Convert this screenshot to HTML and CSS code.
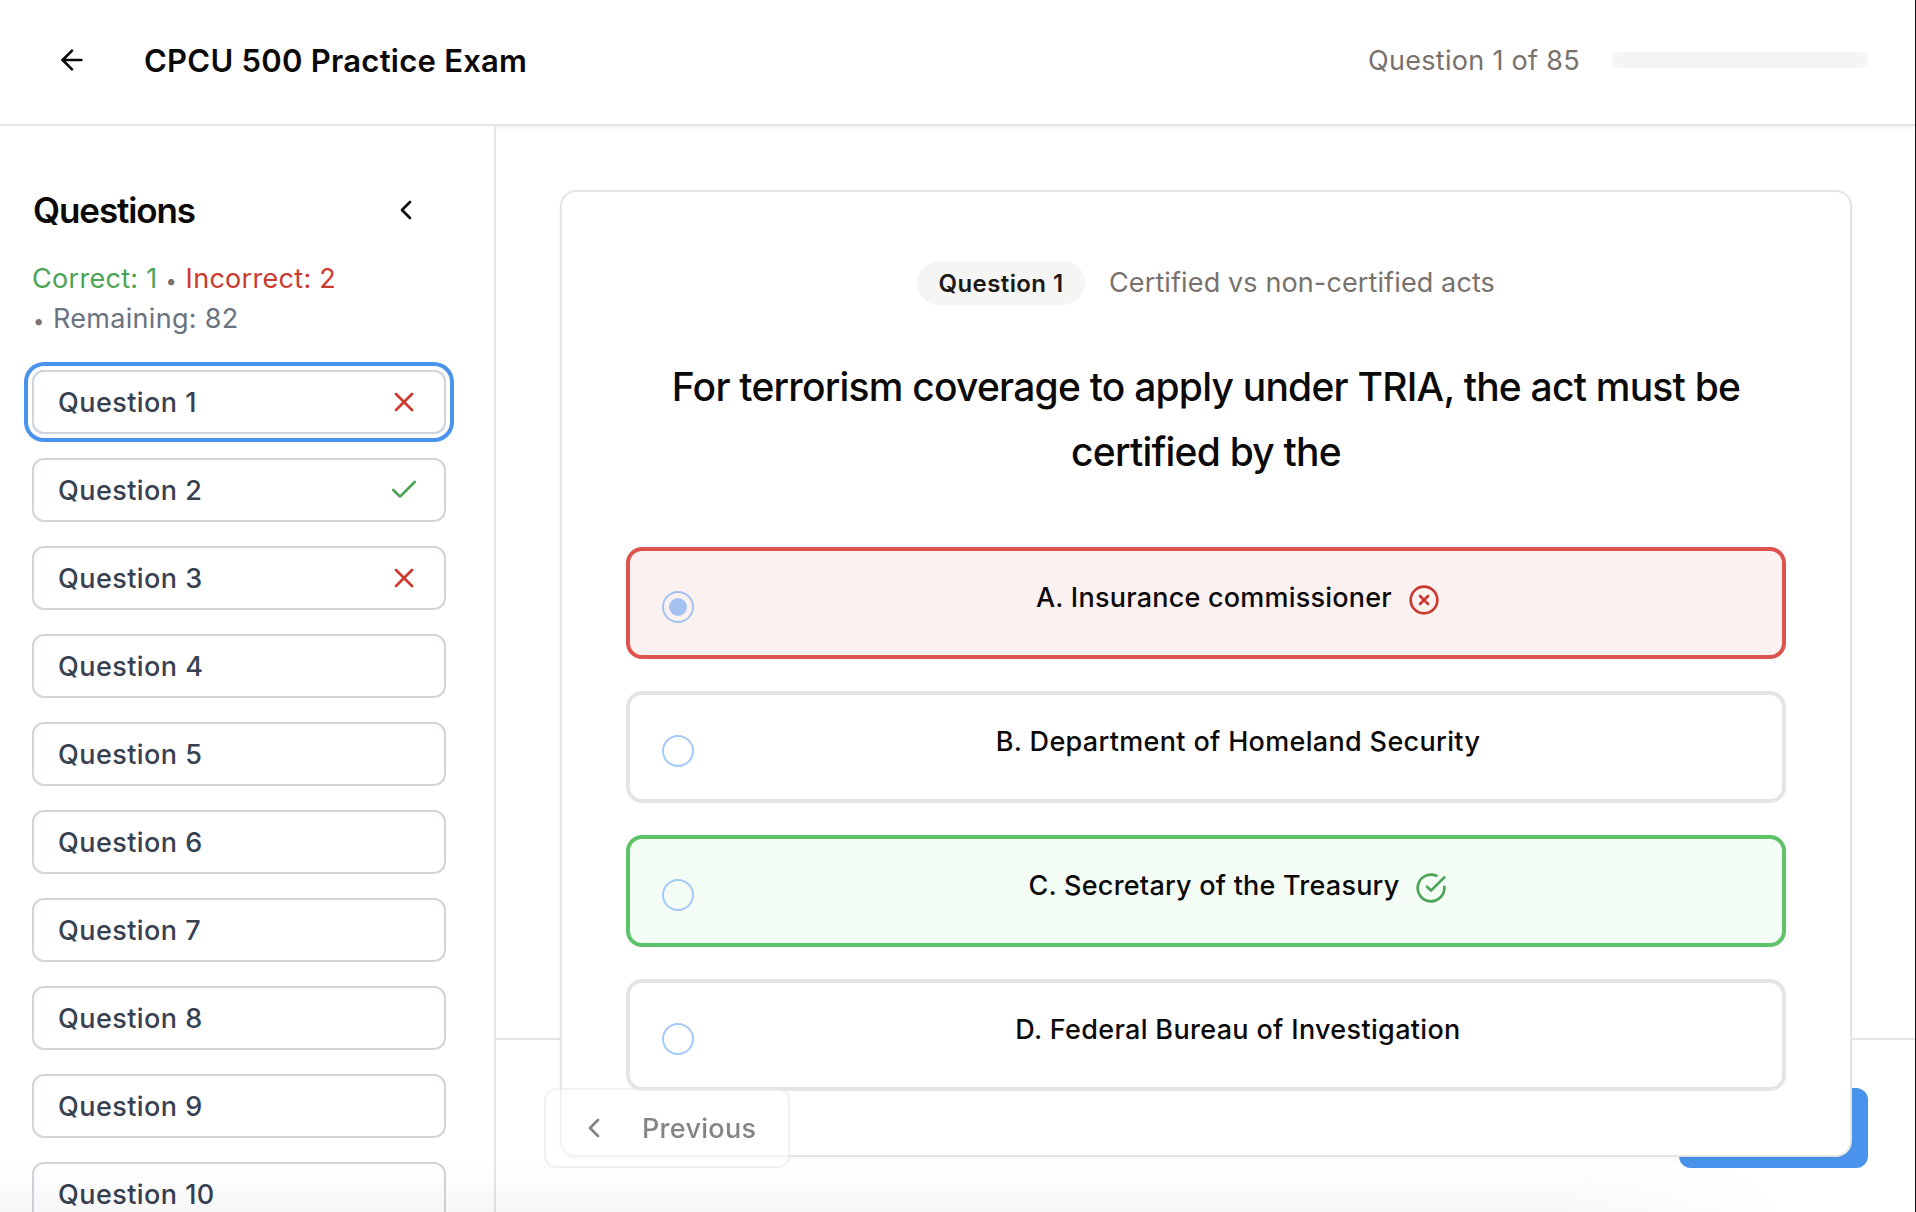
FILE: index.html
```html
<!DOCTYPE html>
<html lang="en">
<head>
<meta charset="utf-8">
<title>CPCU 500 Practice Exam</title>
<link rel="stylesheet" href="styles.css">
</head>
<body>
<svg class="sprite" aria-hidden="true">
  <symbol id="arrow-left" viewBox="0 0 24 24"><path d="m12 19-7-7 7-7"/><path d="M19 12H5"/></symbol>
  <symbol id="chevron-left" viewBox="0 0 24 24"><path d="m15 18-6-6 6-6"/></symbol>
  <symbol id="x" viewBox="0 0 24 24"><path d="M18 6 6 18"/><path d="m6 6 12 12"/></symbol>
  <symbol id="check" viewBox="0 0 24 24"><path d="M20 6 9 17l-5-5"/></symbol>
  <symbol id="circle-x" viewBox="0 0 24 24"><circle cx="12" cy="12" r="10"/><path d="m15 9-6 6"/><path d="m9 9 6 6"/></symbol>
  <symbol id="circle-check" viewBox="0 0 24 24"><path d="M22 11.08V12a10 10 0 1 1-5.93-9.14"/><path d="m9 11 3 3L22 4"/></symbol>
</svg>
<div class="app">
  <header class="header">
    <svg class="icon"><use href="#arrow-left"/></svg>
    <h1 class="title">CPCU 500 Practice Exam</h1>
    <span class="counter">Question 1 of 85</span>
    <div class="progress"></div>
  </header>
  <div class="body">
    <aside class="sidebar">
      <div class="sidebar-head">
        <h2 class="sidebar-title">Questions</h2>
        <svg class="icon"><use href="#chevron-left"/></svg>
      </div>
      <div class="stats">
        <div><span class="correct">Correct: 1</span><span class="dot">•</span><span class="incorrect">Incorrect: 2</span></div>
        <div><span class="dot dot-first">•</span><span class="remaining">Remaining: 82</span></div>
      </div>
      <nav class="list">
        <div class="item item-active">Question 1<svg class="icon incorrect"><use href="#x"/></svg></div>
        <div class="item">Question 2<svg class="icon correct"><use href="#check"/></svg></div>
        <div class="item">Question 3<svg class="icon incorrect"><use href="#x"/></svg></div>
        <div class="item">Question 4</div>
        <div class="item">Question 5</div>
        <div class="item">Question 6</div>
        <div class="item">Question 7</div>
        <div class="item">Question 8</div>
        <div class="item">Question 9</div>
        <div class="item">Question 10</div>
      </nav>
    </aside>
    <main class="main">
      <section class="card">
        <div class="meta"><span class="badge">Question 1</span><span class="topic">Certified vs non-certified acts</span></div>
        <h3 class="prompt">For terrorism coverage to apply under TRIA, the act must be<br>certified by the</h3>
        <div class="options">
          <div class="option option-wrong"><span class="radio radio-on"></span><div class="label"><span class="text-a">A. Insurance commissioner</span><svg class="icon incorrect"><use href="#circle-x"/></svg></div></div>
          <div class="option"><span class="radio"></span><div class="label"><span>B. Department of Homeland Security</span></div></div>
          <div class="option option-right"><span class="radio"></span><div class="label"><span class="text-a">C. Secretary of the Treasury</span><svg class="icon correct"><use href="#circle-check"/></svg></div></div>
          <div class="option"><span class="radio"></span><div class="label"><span>D. Federal Bureau of Investigation</span></div></div>
        </div>
      </section>
      <footer class="footer">
        <div class="previous"><svg class="icon"><use href="#chevron-left"/></svg>Previous</div>
        <div class="next"></div>
      </footer>
    </main>
  </div>
  <div class="fade"></div>
  <div class="edge"></div>
</div>
</body>
</html>
```
FILE: styles.css
```css
* { box-sizing: border-box; }
body { margin: 0; background: #fff; color: #0c0a09; font-family: Inter, "Liberation Sans", sans-serif; font-size: 27px; }
h1, h2, h3 { margin: 0; }
.sprite { display: none; }
.icon { width: 32px; height: 32px; flex: none; fill: none; stroke: currentColor; stroke-width: 2; stroke-linecap: round; stroke-linejoin: round; }
.app { position: relative; display: flex; flex-direction: column; width: 1916px; height: 1212px; overflow: hidden; }

.header { position: relative; z-index: 1; display: flex; align-items: center; flex: none; height: 126px; padding: 0 48px 4px 56px; background: #fff; border-bottom: 2px solid #e5e5e5; box-shadow: 0 2px 6px rgba(0, 0, 0, .06); }
.title { flex: 1; margin-left: 56px; font-size: 31px; font-weight: 600; letter-spacing: .25px; }
.counter { color: #78716c; letter-spacing: .3px; }
.progress { width: 256px; height: 16px; margin-left: 32px; border-radius: 8px; background: #f5f5f4; }

.body { display: flex; flex: 1; min-height: 0; }
.sidebar { position: relative; z-index: 2; flex: none; width: 496px; padding: 64px 48px 0 32px; background: #fff; border-right: 2px solid #e5e5e5; }
.sidebar-head { display: flex; align-items: center; justify-content: space-between; height: 40px; padding-right: 24px; }
.sidebar-title { margin-left: 1px; font-size: 35px; font-weight: 600; letter-spacing: -1.1px; }
.stats { margin-top: 29px; line-height: 40px; letter-spacing: .3px; white-space: nowrap; }
.correct { color: #4ba355; }
.incorrect { color: #cb392f; }
.remaining { color: #6b7280; }
.dot { display: inline-block; width: 13px; margin: 0 8px 0 7px; color: #78716c; font-size: 20px; line-height: 1; text-align: center; letter-spacing: 0; }
.dot-first { margin-left: 0; }
.list { display: flex; flex-direction: column; gap: 24px; margin-top: 31px; }
.item { display: flex; align-items: center; justify-content: space-between; flex: none; width: 414px; height: 64px; padding: 0 24px; border: 2px solid #d1d5db; border-radius: 12px; color: #374151; font-weight: 500; letter-spacing: .45px; }
.item-active { box-shadow: 0 0 0 4px #fff, 0 0 0 8px #4a93ec; }

.main { display: grid; flex: 1; min-width: 0; }
.card { grid-area: 1 / 1; align-self: start; z-index: 1; height: 967px; margin: 64px 64px 0; padding: 69px 64px 0; background: #fff; border: 2px solid #e5e5e5; border-radius: 16px; box-shadow: 0 2px 4px rgba(0, 0, 0, .05); }
.meta { display: flex; align-items: center; justify-content: center; gap: 24px; height: 44px; }
.badge { width: 168px; height: 44px; padding-top: 1px; border-radius: 22px; background: #f5f5f4; color: #1c1917; font-size: 24px; font-weight: 600; line-height: 44px; letter-spacing: .41px; text-align: center; }
.topic { padding-bottom: 2px; color: #78716c; letter-spacing: .12px; }
.prompt { margin-top: 49px; font-size: 39px; font-weight: 500; line-height: 65px; letter-spacing: -.78px; text-align: center; white-space: nowrap; }
.options { display: flex; flex-direction: column; gap: 32px; margin-top: 63px; }
.option { display: flex; gap: 32px; height: 112px; padding: 32px; border: 4px solid #e6e5e3; border-radius: 16px; }
.option-wrong { background: #fbf1f0; border-color: #df534e; }
.option-right { background: #f3fdf5; border-color: #5ec269; }
.radio { flex: none; width: 32px; height: 32px; margin-top: 8px; border: 2px solid #a3c9f7; border-radius: 50%; }
.radio-on { padding: 5px; border-color: #a3c2f0; background: #a3c2f0 content-box; }
.label { display: flex; flex: 1; align-items: flex-start; justify-content: center; gap: 16px; font-weight: 500; line-height: 30px; letter-spacing: .33px; }
.label .icon { margin-top: 1px; }
.text-a { letter-spacing: .22px; }

.footer { grid-area: 1 / 1; align-self: end; display: flex; justify-content: space-between; height: 174px; padding: 48px; border-top: 2px solid #e5e5e5; }
.previous { position: relative; z-index: 2; display: flex; align-items: center; gap: 32px; width: 246px; height: 80px; padding-left: 32px; background: #fff; border: 2px solid #e5e5e5; border-radius: 12px; font-weight: 500; letter-spacing: .29px; opacity: .5; }
.next { width: 189px; height: 80px; border-radius: 12px; background: #4a93ec; }

.fade { position: absolute; z-index: 3; left: 0; right: 0; bottom: 0; height: 50px; background: linear-gradient(rgba(0, 0, 0, 0), rgba(0, 0, 0, .03)); -webkit-mask: linear-gradient(90deg, #000 1550px, transparent 1790px); mask: linear-gradient(90deg, #000 1550px, transparent 1790px); }
.edge { position: absolute; z-index: 4; top: 0; right: 0; bottom: 0; width: 1px; background: #10131f; }
```
